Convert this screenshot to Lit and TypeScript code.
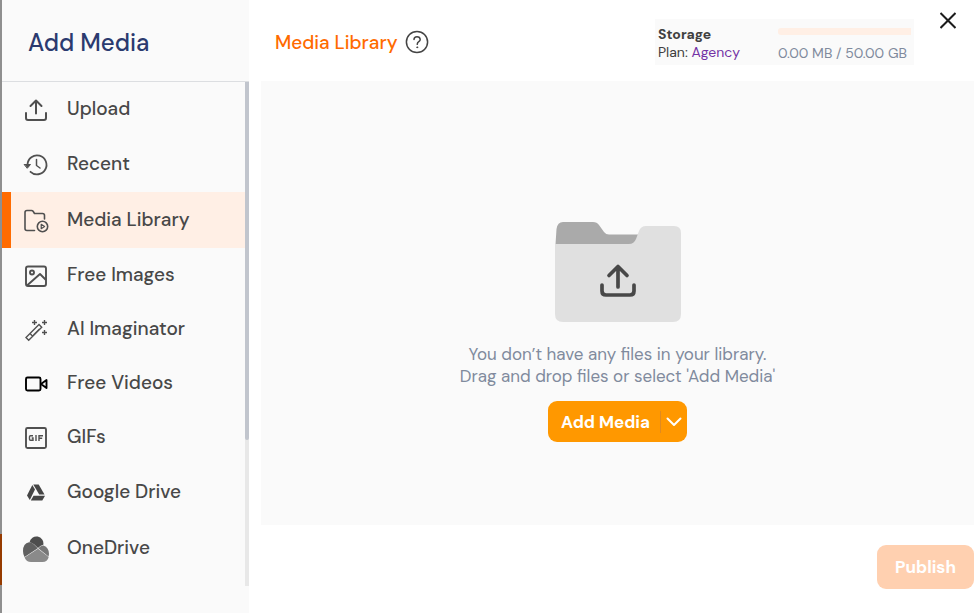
import { LitElement, html, css } from "lit";
import { customElement, state } from "lit/decorators.js";
import { classMap } from "lit/directives/class-map.js";

const uploadIcon = html`<svg width="24" height="24" viewBox="0 0 24 24" fill="none" stroke="#505050" stroke-width="2" stroke-linecap="round" stroke-linejoin="round"><path d="M2 15v5q0 2 2 2h16q2 0 2-2v-5M12 15.500V2.500M6.500 8L12 2.500 17.500 8" /></svg>`;

const recentIcon = html`<svg width="26" height="24" viewBox="0 0 26 24" fill="none" stroke="#505050" stroke-width="1.800" stroke-linecap="round" stroke-linejoin="round"><path d="M4.500 11.500A9.500 9.500 0 1 1 7.500 18.800" /><path d="M13.500 6.500v6l3.500 2.500" stroke-width="1.500" /><path d="M1.500 11.500h6L4.500 15Z" fill="#505050" stroke-width="1" /></svg>`;

const libraryIcon = html`<svg width="26" height="26" viewBox="0 0 26 26" fill="none" stroke="#505050" stroke-width="1.600" stroke-linecap="round" stroke-linejoin="round"><path d="M11.500 22.500H4q-2 0-2-2V4.500q0-2 2-2h4.500q1 0 1.600.8L11.500 5.500H19.500q2 0 2 2V11" /><circle cx="19.500" cy="18.500" r="5.200" /><path d="M18.200 16.300v4.400l3.400-2.200Z" stroke-width="1.200" /></svg>`;

const imageIcon = html`<svg width="24" height="24" viewBox="0 0 24 24" fill="none" stroke="#505050" stroke-width="1.900" stroke-linejoin="round"><rect x="2" y="2.500" width="20" height="19.500" rx="2" /><circle cx="8" cy="8.500" r="2" /><path d="M3 21.500L16 10l6 6" /></svg>`;

const wandIcon = html`<svg width="24" height="24" viewBox="0 0 24 24" fill="none" stroke="#505050" stroke-width="1.400"><path d="M2 19.500L15 6.500l2.700 2.700-13 13ZM6 15.500l2.700 2.700M9.500 17l6-6" /><path d="M10.500 2v5M8 4.500h5M20.500 2v5M18 4.500h5M20.500 12v5M18 14.500h5" /></svg>`;

const videoIcon = html`<svg width="24" height="24" viewBox="0 0 24 24" fill="none" stroke="#000" stroke-width="1.900" stroke-linejoin="round"><rect x="2" y="5.500" width="14.500" height="13" rx="1.500" /><path d="M17 12L22.500 8v8Z" /></svg>`;

const gifIcon = html`<svg width="24" height="24" viewBox="0 0 24 24" fill="none" stroke="#505050" stroke-width="1.900"><rect x="2" y="2" width="20" height="20" rx="1.500" /><path d="M9 9.700H6.500q-1 0-1 1v2.600q0 1 1 1H9V12H7.700M12 9v6M15 15V9.700h4M15 12.300h3.200" stroke-width="1.400" /></svg>`;

const driveIcon = html`<svg width="26" height="26" viewBox="0 0 26 26" fill="#454545"><path d="M9.300 5L12 9.500 6.800 20 4 15.500Z" /><path d="M10.300 4.500h5.400L21.500 14.500h-5.300Z" /><path d="M10.500 15.700H22L19.300 20.500H7.800Z" /></svg>`;

const oneDriveIcon = html`<svg width="26" height="26" viewBox="0 0 26 26"><path d="M6.500 6.200A7 7 0 0 1 20.300 8.800Q17 9.500 15 12L11 8.200Q9 6.500 6.500 6.200Z" fill="#4d4d4d" /><path d="M6 6.300Q9 6.200 11 8.500L14.800 12.300 1.500 21Q0 18.500 0 15Q0 7.500 6 6.300Z" fill="#606060" /><path d="M15.300 12.300Q18 9.200 20.500 9.500Q26 11.500 26 18L25.500 20.500Z" fill="#777" /><path d="M1.500 21.500L15 12.800 25.700 21Q24.500 26 19.500 26H8Q3.500 26 1.500 21.500Z" fill="#8a8a8a" /></svg>`;

const helpIcon = html`<svg width="24" height="24" viewBox="0 0 24 24" fill="none" stroke="#444" stroke-width="1.500" stroke-linecap="round"><circle cx="12" cy="12" r="10.600" /><path d="M9 9.500Q9 6.700 12 6.700T15.200 9.500Q15.200 10.800 13.800 11.700T12.200 14.300" /><circle cx="12.200" cy="17.300" r=".5" fill="#444" stroke-width="1" /></svg>`;

const closeIcon = html`<svg width="16" height="18" viewBox="0 0 16 18" fill="none" stroke="#1c1c1c" stroke-width="2"><path d="M.5 1l15 15M15.500 1l-15 15" /></svg>`;

const chevronIcon = html`<svg width="16" height="10" viewBox="0 0 16 10" fill="none" stroke="#fff" stroke-width="2" stroke-linecap="round" stroke-linejoin="round"><path d="M1.500 1.500L8 8l6.500-6.500" /></svg>`;

const folderArt = html`<svg width="126" height="100" viewBox="0 0 126 100" aria-hidden="true">
  <path d="M0 30L1.500 7Q2.500 0 8 0h30q4 0 6 3l5 7q2 2.500 5 2.500h32V30Z" fill="#aaa" />
  <path d="M0 22H74q5 0 7-5l3-8q2-5 7-5h28q7 0 7 7V92q0 8-8 8H8q-8 0-8-8Z" fill="#e0e0e0" />
  <path d="M47 63v6q0 4 4 4h24q4 0 4-4v-6M63 65V45M54 53.500L63 44.500l9 9" fill="none" stroke="#484848" stroke-width="3.700" stroke-linecap="round" stroke-linejoin="round" />
</svg>`;

const sources = [
  { label: "Upload", icon: uploadIcon },
  { label: "Recent", icon: recentIcon, tall: true },
  { label: "Media Library", icon: libraryIcon, tall: true },
  { label: "Free Images", icon: imageIcon },
  { label: "AI Imaginator", icon: wandIcon },
  { label: "Free Videos", icon: videoIcon },
  { label: "GIFs", icon: gifIcon },
  { label: "Google Drive", icon: driveIcon, tall: true },
  { label: "OneDrive", icon: oneDriveIcon, tall: true },
];

@customElement("app-root")
export class AppRoot extends LitElement {
  @state() private active = "Media Library";

  static styles = css`
    :host {
      display: flex;
      min-height: 100vh;
      background: #fff;
      color: #484848;
      font-family: "DM Sans", Inter, sans-serif;
      font-size: 14px;
    }
    * { box-sizing: border-box; }
    h1, h2, p, ul { margin: 0; padding: 0; }
    svg { display: block; flex: none; }
    button { font: inherit; color: inherit; border: 0; background: none; padding: 0; cursor: pointer; }

    .backdrop {
      flex: none;
      width: 2px;
      display: flex;
      flex-direction: column;
      background: #8f8f8f;
    }
    .backdrop-accent { height: 51px; margin-top: 534px; background: #963b00; }

    .sidebar {
      flex: none;
      width: 247px;
      display: flex;
      flex-direction: column;
      background: #fafafa;
      padding-bottom: 27px;
    }
    .sidebar-head {
      height: 82px;
      padding: 4px 26px 0;
      display: flex;
      align-items: center;
      border-bottom: 1px solid #dcdee1;
    }
    .dialog-title {
      font-size: 24px;
      font-weight: 500;
      color: #2b3a6f;
    }
    .scroller { flex: 1; display: flex; }
    .sources { flex: 1; list-style: none; }
    .source {
      width: 100%;
      height: 54px;
      padding-left: 21px;
      display: flex;
      align-items: center;
      gap: 18px;
      text-align: left;
      font-size: 19px;
      font-weight: 500;
    }
    .source.tall { height: 56px; }
    .source.active { background: #ffefe5; border-left: 9px solid #ff6b00; padding-left: 12px; }
    .icon { width: 26px; padding-top: 2px; display: flex; justify-content: center; }
    .label { padding-bottom: 2px; }
    .track { width: 4px; background: #e8e8e8; }
    .thumb { height: 71%; background: #c1c5cd; border-radius: 0 0 2px 2px; }

    .main {
      flex: 1;
      min-width: 0;
      display: flex;
      flex-direction: column;
      padding: 0 5px 24px 12px;
    }
    .topbar { height: 81px; display: flex; align-items: center; padding: 0 18px 0 14px; }
    .heading { display: flex; align-items: center; gap: 7px; flex: 1; padding-top: 3px; }
    .title {
      font-size: 19px;
      font-weight: 500;
      color: #ff6b00;
    }
    .storage {
      width: 259px;
      height: 46px;
      padding: 6px 3px 0;
      display: flex;
      justify-content: space-between;
      align-items: flex-start;
      background: #fafafa;
      line-height: 18px;
      margin-top: 3px;
    }
    .storage-name { font-weight: 700; color: #404040; }
    .plan { color: #404040; }
    .plan a { color: #7332a5; text-decoration: none; }
    .usage { min-width: 133px; padding-top: 3px; color: #808a9d; white-space: nowrap; display: grid; gap: 9px; }
    .meter { height: 7px; border-radius: 3px 0 0 3px; background: #ffefe5; }
    .close { align-self: flex-start; margin: 12px 0 0 26px; }

    .dropzone {
      flex: 1;
      display: flex;
      flex-direction: column;
      align-items: center;
      justify-content: center;
      padding-top: 58px;
      background: #fafafa;
    }
    .hint { margin: 21px 0 14px; text-align: center; font-size: 17px; line-height: 22px; color: #808a9d; }
    .split {
      height: 41px;
      display: flex;
      align-items: center;
      border-radius: 9px;
      background: #ff9800;
      color: #fff;
      font-size: 17px;
      font-weight: 700;
    }
    .split-main { width: 112px; height: 41px; padding-left: 3px; }
    .split-more {
      width: 27px;
      height: 22px;
      display: flex;
      align-items: center;
      justify-content: center;
      border-left: 1px solid #e08a20;
    }
    .footer { display: flex; justify-content: flex-end; margin-top: 20px; }
    .publish {
      width: 97px;
      height: 44px;
      border-radius: 9px;
      background: #ffd0b0;
      color: #fff;
      font-size: 17px;
      font-weight: 700;
    }
  `;

  render() {
    return html`
      <div class="backdrop"><div class="backdrop-accent"></div></div>
      <aside class="sidebar">
        <header class="sidebar-head"><h1 class="dialog-title">Add Media</h1></header>
        <div class="scroller">
          <ul class="sources">
            ${sources.map(
              (s) => html`<li>
                <button
                  class=${classMap({ source: true, tall: !!s.tall, active: s.label === this.active })}
                  @click=${() => (this.active = s.label)}
                ><span class="icon">${s.icon}</span><span class="label">${s.label}</span></button>
              </li>`
            )}
          </ul>
          <div class="track"><div class="thumb"></div></div>
        </div>
      </aside>
      <main class="main">
        <header class="topbar">
          <div class="heading">
            <h2 class="title">Media Library</h2>
            <button aria-label="Help">${helpIcon}</button>
          </div>
          <div class="storage">
            <div>
              <div class="storage-name">Storage</div>
              <div class="plan">Plan: <a href="#">Agency</a></div>
            </div>
            <div class="usage">
              <div class="meter"></div>
              <span>0.00 MB / 50.00 GB</span>
            </div>
          </div>
          <button class="close" aria-label="Close">${closeIcon}</button>
        </header>
        <section class="dropzone">
          ${folderArt}
          <p class="hint">You don’t have any files in your library.<br />Drag and drop files or select 'Add Media'</p>
          <div class="split">
            <button class="split-main">Add Media</button>
            <button class="split-more" aria-label="More options">${chevronIcon}</button>
          </div>
        </section>
        <footer class="footer"><button class="publish">Publish</button></footer>
      </main>
    `;
  }
}
